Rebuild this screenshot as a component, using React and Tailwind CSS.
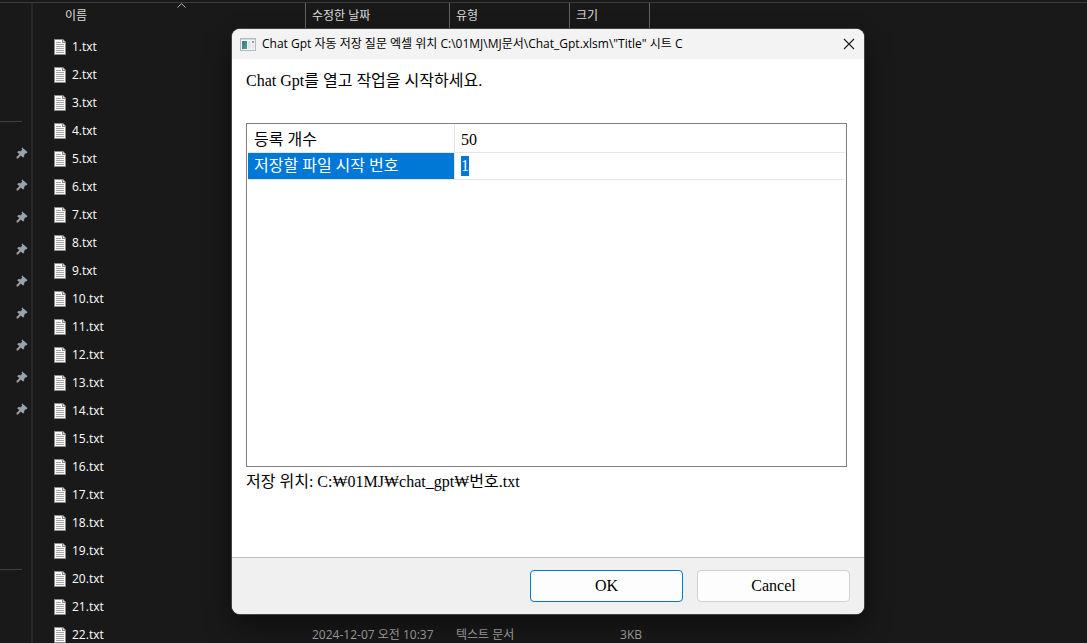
import React, { useEffect, useRef, useState } from 'react';

const FILES = Array.from({ length: 22 }, (_, i) => ({ name: `${i + 1}.txt` }));
FILES[21] = { name: '22.txt', date: '2024-12-07 오전 10:37', type: '텍스트 문서', size: '3KB' };

const PINS = Array.from({ length: 9 }, (_, i) => i);

const PinIcon = () => (
  <svg width="12" height="12" viewBox="0 0 12 12" fill="#98a2aa" aria-hidden="true">
    <path d="M6.2 0.5 L11.5 5 L10.8 6.2 L9.8 6.2 L8.2 7.8 L8.2 9.6 L7 10.6 L4.8 8.6 L2 11.4 L0.5 11.4 L0.5 10 L3.4 7.2 L1.3 5.2 L2.4 3.9 L4.6 4.2 L6.1 2.7 L5.5 1.6 Z" />
  </svg>
);

const TextFileIcon = () => (
  <svg width="12" height="16" viewBox="0 0 12 16" aria-hidden="true">
    <path d="M0 0H9L12 3V16H0Z" fill="#8b8b8b" />
    <path d="M1 1H8V4H11V15H1Z" fill="#fafafa" />
    <path d="M9 1L11 3H9Z" fill="#e4e4e4" />
    <path d="M2 3.5H7M2 5.5H10M2 7.5H10M2 9.5H10M2 11.5H10M2 13.5H10" stroke="#a6a6a6" />
  </svg>
);

const WindowIcon = () => (
  <svg width="16" height="13" viewBox="0 0 16 13" aria-hidden="true">
    <defs>
      <linearGradient id="preview" x1="0" y1="0" x2="1" y2="1">
        <stop offset="0" stopColor="#3f6fa8" />
        <stop offset="1" stopColor="#4fa37c" />
      </linearGradient>
    </defs>
    <rect x="0.5" y="0.5" width="15" height="12" fill="#f4f6f7" stroke="#b4b8bc" />
    <rect x="1" y="1" width="14" height="1" fill="#d5dadd" />
    <rect x="2" y="3" width="5" height="8" fill="url(#preview)" />
    <rect x="8" y="3" width="3" height="8" fill="#dfe6ea" />
    <rect x="12" y="3" width="2" height="2" fill="#7f9db5" />
    <rect x="12" y="6" width="2" height="5" fill="#e3e6e8" />
  </svg>
);

const Sidebar = () => (
  <nav className="w-[33px] shrink-0 border-r-2 border-[#282828]">
    <div className="mr-[9px] h-[119px] border-b border-[#3f3f3f]" />
    <ul className="mt-[15px] h-[432px]">
      {PINS.map((pin) => (
        <li key={pin} className="flex h-8 items-center justify-end pr-[3px]">
          <PinIcon />
        </li>
      ))}
    </ul>
    <div className="mr-[9px] border-t border-[#3f3f3f]" />
  </nav>
);

const FileList = () => (
  <main className="min-w-0 flex-1 pl-[14px]">
    <table className="table-fixed border-separate border-spacing-0 text-left text-xs">
      <thead>
        <tr className="h-[29px] text-[#dedede]">
          <th className="relative w-[259px] border-r border-[#636363] pb-1 pl-[18px] font-normal">
            이름
            <svg
              className="absolute top-0 left-[130px]"
              width="9"
              height="5"
              viewBox="0 0 9 5"
              fill="none"
              stroke="#b5b5b5"
              aria-hidden="true"
            >
              <path d="M0.5 4.5L4.5 0.7L8.5 4.5" />
            </svg>
          </th>
          <th className="w-36 border-r border-[#636363] pb-1 pl-[6px] font-normal">수정한 날짜</th>
          <th className="w-[120px] border-r border-[#636363] pb-1 pl-[6px] font-normal">유형</th>
          <th className="w-20 border-r border-[#636363] pb-1 pl-[6px] font-normal">크기</th>
        </tr>
      </thead>
      <tbody>
        {FILES.map((file) => (
          <tr key={file.name} className="h-7 text-[#a9a9a9]">
            <td className="p-0 pt-px pl-[7px]">
              <div className="flex items-center gap-[6px] text-white">
                <TextFileIcon />
                {file.name}
              </div>
            </td>
            <td className="p-0 pt-px pl-[6px]">{file.date}</td>
            <td className="p-0 pt-px pl-[6px]">{file.type}</td>
            <td className="p-0 pt-px pr-2 text-right">{file.size}</td>
          </tr>
        ))}
      </tbody>
    </table>
  </main>
);

const SaveDialog = () => {
  const [count, setCount] = useState('50');
  const [start, setStart] = useState('1');
  const startRef = useRef(null);

  useEffect(() => {
    startRef.current?.focus();
    startRef.current?.select();
  }, []);

  return (
    <section
      role="dialog"
      aria-labelledby="dialog-title"
      className="absolute top-[29px] left-[232px] flex w-[632px] flex-col overflow-hidden rounded-lg bg-white font-['Liberation_Serif','Noto_Sans_CJK_KR',serif] text-base text-black shadow-[0_12px_28px_rgba(0,0,0,0.45)] ring-1 ring-[#444]"
    >
      <header className="flex h-[30px] items-center bg-[#f3f3f3] pr-[9px] pl-2 font-['Open_Sans','Noto_Sans_CJK_KR',sans-serif] text-xs">
        <WindowIcon />
        <h1 id="dialog-title" className="ml-[6px] flex-1 whitespace-nowrap">
          Chat Gpt 자동 저장 질문 엑셀 위치 C:\01MJ\MJ문서\Chat_Gpt.xlsm\"Title" 시트 C
        </h1>
        <button aria-label="Close">
          <svg width="12" height="12" viewBox="0 0 12 12" stroke="#1a1a1a" strokeWidth="1.1">
            <path d="M1 1L11 11M11 1L1 11" />
          </svg>
        </button>
      </header>

      <div className="flex h-[498px] flex-col px-[14px] pt-[10px]">
        <p className="leading-6">Chat Gpt를 열고 작업을 시작하세요.</p>

        <div className="mt-[30px] mr-[3px] h-[344px] border border-[#7f7f7f] px-px">
          <table className="w-full table-fixed border-separate border-spacing-0">
            <tbody>
              <tr className="h-[29px]">
                <th
                  scope="row"
                  className="w-[207px] border-r border-b border-[#e6e6e6] p-0 pt-1 pl-[6px] text-left leading-6 font-normal"
                >
                  <label htmlFor="count">등록 개수</label>
                </th>
                <td className="border-b border-[#e6e6e6] p-0 pt-1 pl-[6px]">
                  <input
                    id="count"
                    className="block h-5 w-full outline-none"
                    value={count}
                    onChange={(e) => setCount(e.target.value)}
                  />
                </td>
              </tr>
              <tr className="h-[27px]">
                <th
                  scope="row"
                  className="border-r border-b border-[#e6e6e6] bg-[#0078d7] bg-clip-padding p-0 pl-[6px] text-left leading-6 font-normal text-white"
                >
                  <label htmlFor="start">저장할 파일 시작 번호</label>
                </th>
                <td className="border-b border-[#e6e6e6] p-0 pl-[6px]">
                  <input
                    id="start"
                    ref={startRef}
                    className="block h-5 w-full outline-none selection:bg-[#0078d7] selection:text-white"
                    value={start}
                    onChange={(e) => setStart(e.target.value)}
                  />
                </td>
              </tr>
            </tbody>
          </table>
        </div>

        <p className="mt-[3px] leading-6">저장 위치: C:₩01MJ₩chat_gpt₩번호.txt</p>
      </div>

      <footer className="flex justify-end gap-[14px] border-t border-[#bfbfbf] bg-[#f0f0f0] px-[14px] py-3">
        <button className="h-8 w-[153px] rounded border border-[#0078d4] bg-[#fdfdfd]">OK</button>
        <button className="h-8 w-[153px] rounded border border-[#d0d0d0] bg-[#fdfdfd]">Cancel</button>
      </footer>
    </section>
  );
};

const App = () => (
  <div className="relative flex h-screen flex-col overflow-hidden bg-[#191919] font-['Open_Sans','Noto_Sans_CJK_KR',sans-serif]">
    <div className="h-[3px] shrink-0 border-b border-[#3c3c3c]" />
    <div className="flex min-h-0 flex-1">
      <Sidebar />
      <FileList />
    </div>
    <SaveDialog />
  </div>
);

export default App;
